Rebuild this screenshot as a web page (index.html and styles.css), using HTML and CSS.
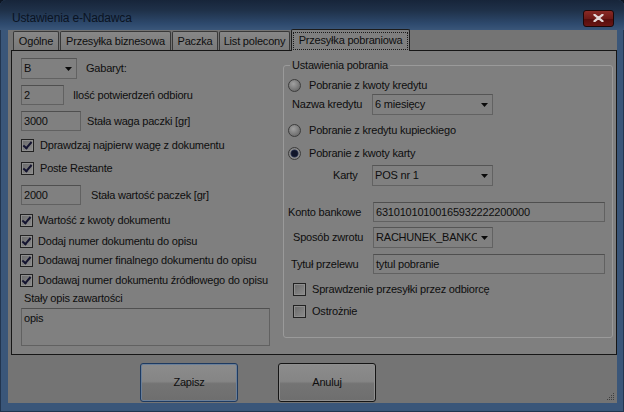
FILE: index.html
```html
<!DOCTYPE html>
<html lang="pl">
<head>
<meta charset="utf-8">
<title>Ustawienia e-Nadawca</title>
<link rel="stylesheet" href="styles.css">
</head>
<body>
<div class="window">
  <div class="titlebar">
    <div class="title">Ustawienia e-Nadawca</div>
    <div class="close"><svg width="11" height="8" viewBox="0 0 11 8"><path d="M1.5 0.8 L9.5 7.2 M9.5 0.8 L1.5 7.2" stroke="#e4d8d8" stroke-width="2.2" stroke-linecap="round"/></svg></div>
  </div>
  <div class="client">
    <div class="tabstrip">
      <div class="tab tab-general">Ogólne</div>
      <div class="tab tab-business">Przesyłka biznesowa</div>
      <div class="tab tab-parcel">Paczka</div>
      <div class="tab tab-letter">List polecony</div>
      <div class="tab tab-cod active"><span class="focus">Przesyłka pobraniowa</span></div>
    </div>
    <div class="tabpage">
      <div class="col-left">
        <div class="row h21">
          <div class="combo w56"><span class="combo-text">B</span><span class="combo-btn"><svg width="7" height="4" viewBox="0 0 7 4"><path d="M0 0H7L3.5 4Z" fill="#0a0a0a"/></svg></span></div>
          <span class="lbl ml9">Gabaryt:</span>
        </div>
        <div class="row h20 mt6">
          <div class="tb w43">2</div>
          <span class="lbl ml9">Ilość potwierdzeń odbioru</span>
        </div>
        <div class="row h20 mt6">
          <div class="tb w60">3000</div>
          <span class="lbl ml6">Stała waga paczki [gr]</span>
        </div>
        <div class="row h17 mt6">
          <span class="cb checked"></span><span class="lbl">Dprawdzaj najpierw wagę z dokumentu</span>
        </div>
        <div class="row h17 mt6">
          <span class="cb checked"></span><span class="lbl">Poste Restante</span>
        </div>
        <div class="row h20 mt8">
          <div class="tb w60">2000</div>
          <span class="lbl ml10">Stała wartość paczek [gr]</span>
        </div>
        <div class="row h17 mt7 shift">
          <span class="cb checked"></span><span class="lbl">Wartość z kwoty dokumentu</span>
        </div>
        <div class="row h17 mt4 shift">
          <span class="cb checked"></span><span class="lbl">Dodaj numer dokumentu do opisu</span>
        </div>
        <div class="row h17 mt2 shift">
          <span class="cb checked"></span><span class="lbl">Dodawaj numer finalnego dokumentu do opisu</span>
        </div>
        <div class="row h17 mt3 shift">
          <span class="cb checked"></span><span class="lbl">Dodawaj numer dokumentu źródłowego do opisu</span>
        </div>
        <div class="row h16 mt1">
          <span class="lbl pl3">Stały opis zawartości</span>
        </div>
        <div class="memo mt2">opis</div>
      </div>
      <fieldset class="group">
        <legend>Ustawienia pobrania</legend>
        <div class="group-body">
          <div class="row h16 mt5">
            <span class="radio"></span><span class="lbl">Pobranie z kwoty kredytu</span>
          </div>
          <div class="row h21 mt1">
            <span class="flabel w88 pl8">Nazwa kredytu</span>
            <div class="combo w121"><span class="combo-text">6 miesięcy</span><span class="combo-btn"><svg width="7" height="4" viewBox="0 0 7 4"><path d="M0 0H7L3.5 4Z" fill="#0a0a0a"/></svg></span></div>
          </div>
          <div class="row h16 mt7">
            <span class="radio"></span><span class="lbl">Pobranie z kredytu kupieckiego</span>
          </div>
          <div class="row h16 mt7">
            <span class="radio selected"></span><span class="lbl">Pobranie z kwoty karty</span>
          </div>
          <div class="row h21 mt4">
            <span class="flabel w88 pl49">Karty</span>
            <div class="combo w121"><span class="combo-text">POS nr 1</span><span class="combo-btn"><svg width="7" height="4" viewBox="0 0 7 4"><path d="M0 0H7L3.5 4Z" fill="#0a0a0a"/></svg></span></div>
          </div>
          <div class="row h20 mt16">
            <span class="flabel w89 pl4">Konto bankowe</span>
            <div class="tb w232">63101010100165932222200000</div>
          </div>
          <div class="row h21 mt5">
            <span class="flabel w89 pl9">Sposób zwrotu</span>
            <div class="combo w120"><span class="combo-text">RACHUNEK_BANKOWY</span><span class="combo-btn"><svg width="7" height="4" viewBox="0 0 7 4"><path d="M0 0H7L3.5 4Z" fill="#0a0a0a"/></svg></span></div>
          </div>
          <div class="row h20 mt6">
            <span class="flabel w89 pl7">Tytuł przelewu</span>
            <div class="tb w232">tytul pobranie</div>
          </div>
          <div class="row h16 mt7 indent">
            <span class="cb"></span><span class="lbl">Sprawdzenie przesyłki przez odbiorcę</span>
          </div>
          <div class="row h16 mt6 indent">
            <span class="cb"></span><span class="lbl">Ostrożnie</span>
          </div>
        </div>
      </fieldset>
    </div>
    <div class="actions">
      <button class="btn default">Zapisz</button>
      <button class="btn">Anuluj</button>
    </div>
    <div class="grip"><svg width="8" height="8" viewBox="0 0 8 8" fill="#3e3e3e"><rect x="6" y="0" width="1" height="1"/><rect x="4" y="2" width="1" height="1"/><rect x="6" y="2" width="1" height="1"/><rect x="2" y="4" width="1" height="1"/><rect x="4" y="4" width="1" height="1"/><rect x="6" y="4" width="1" height="1"/><rect x="0" y="6" width="1" height="1"/><rect x="2" y="6" width="1" height="1"/><rect x="4" y="6" width="1" height="1"/><rect x="6" y="6" width="1" height="1"/></svg></div>
  </div>
</div>
</body>
</html>
```

FILE: styles.css
```css
* { box-sizing: border-box; }
html, body { margin: 0; padding: 0; background: #0d1522; }
body {
  font-family: "Liberation Sans", Arial, sans-serif;
  font-size: 11px;
  letter-spacing: -0.2px;
  color: #0e0e0e;
  line-height: 13px;
}
.window {
  width: 624px;
  height: 412px;
  display: flex;
  flex-direction: column;
  background: #3a5679;
  border-radius: 6px 6px 0 0;
  overflow: hidden;
  box-shadow: inset 0 0 0 1px #22354f;
}
.titlebar {
  height: 30px;
  flex: none;
  display: flex;
  align-items: center;
  padding: 6px 10px 0 12px;
  background: linear-gradient(#17253a 0%, #1f3149 35%, #2e4a6e 80%, #3a5679 100%);
}
.title {
  flex: 1;
  font-size: 12px;
  letter-spacing: -0.15px;
  color: #0a1322;
}
.close {
  width: 31px;
  height: 17px;
  border: 1px solid #1e0707;
  border-radius: 3px;
  background: linear-gradient(#8a2a25 0%, #6e1a17 50%, #570d0c 55%, #6a1614 100%);
  display: flex;
  align-items: center;
  justify-content: center;
}
.client {
  position: relative;
  flex: 1;
  margin: 0 7px 9px 8px;
  background: #747474;
  display: flex;
  flex-direction: column;
}
.tabstrip {
  height: 20px;
  flex: none;
  display: flex;
  align-items: flex-end;
  gap: 1px;
  padding-left: 5px;
}
.tab {
  height: 19px;
  border: 1px solid #383838;
  border-bottom: none;
  border-radius: 2px 2px 0 0;
  background: linear-gradient(#878787, #797979);
  display: flex;
  align-items: center;
  justify-content: center;
  padding-top: 1px;
  white-space: nowrap;
}
.tab-general { width: 46px; }
.tab-business { width: 111px; }
.tab-parcel { width: 46px; }
.tab-letter { width: 71px; }
.tab-cod { width: 119px; }
.tab.active {
  position: relative;
  z-index: 1;
  height: 22px;
  margin-bottom: -1px;
  padding: 1px 1px 1px;
  background: #7f7f7f;
  border-color: #1c1c1c;
}
.focus {
  flex: 1;
  height: 18px;
  border: 1px dotted #1a1a1a;
  display: flex;
  align-items: center;
  justify-content: center;
}
.tabpage {
  flex: none;
  margin-left: 3px;
  width: 606px;
  height: 305px;
  border: 1px solid #161616;
  background: #7f7f7f;
  display: flex;
  padding: 7px 3px 0 9px;
}
.col-left {
  width: 262px;
  flex: none;
  display: flex;
  flex-direction: column;
}
.row { display: flex; align-items: center; flex: none; white-space: nowrap; }
.h16 { height: 16px; }
.h17 { height: 17px; }
.h20 { height: 20px; }
.h21 { height: 21px; }
.mt1 { margin-top: 1px; }
.mt2 { margin-top: 2px; }
.mt3 { margin-top: 3px; }
.mt4 { margin-top: 4px; }
.mt5 { margin-top: 5px; }
.mt6 { margin-top: 6px; }
.mt7 { margin-top: 7px; }
.mt8 { margin-top: 8px; }
.mt16 { margin-top: 16px; }
.ml6 { margin-left: 6px; }
.ml9 { margin-left: 9px; }
.ml10 { margin-left: 10px; }
.pl3 { padding-left: 3px; }
.pl4 { padding-left: 4px; }
.pl7 { padding-left: 7px; }
.pl8 { padding-left: 8px; }
.pl9 { padding-left: 9px; }
.pl49 { padding-left: 49px; }
.w43 { width: 43px; }
.w56 { width: 56px; }
.w60 { width: 60px; }
.w88 { width: 88px; }
.w89 { width: 89px; }
.w120 { width: 120px; }
.w121 { width: 121px; }
.w232 { width: 232px; }
.flabel { flex: none; }
.tb {
  height: 20px;
  flex: none;
  border: 1px solid #616161;
  border-top-color: #4f4f4f;
  background: #808080;
  padding-left: 2px;
  display: flex;
  align-items: center;
}
.combo {
  height: 21px;
  flex: none;
  border: 1px solid #626262;
  border-top-color: #555555;
  background: #808080;
  display: flex;
  align-items: center;
  padding-left: 2px;
}
.combo-text { flex: 1; overflow: hidden; white-space: nowrap; min-width: 0; }
.combo-btn {
  width: 15px;
  height: 100%;
  flex: none;
  display: flex;
  align-items: center;
  justify-content: center;
  padding-top: 1px;
}
.cb {
  width: 13px;
  height: 13px;
  flex: none;
  margin-left: 0;
  margin-right: 6px;
  border: 1px solid #222222;
  background: linear-gradient(135deg, #6a6a6a, #8c8c8c);
  box-shadow: inset 0 0 0 1px #8e8e8e;
  position: relative;
}
.cb.checked::after {
  content: "";
  position: absolute;
  left: 3px;
  top: 0px;
  width: 3px;
  height: 7px;
  border: solid #141430;
  border-width: 0 2px 2px 0;
  transform: rotate(40deg);
}
.shift .cb { margin-left: -1px; margin-right: 5px; }
.indent .cb { margin-left: 9px; margin-right: 6px; }
.memo {
  width: 249px;
  height: 38px;
  flex: none;
  border: 1px solid #616161;
  border-top-color: #505050;
  background: #808080;
  padding: 3px 2px;
}
.group {
  margin: 0;
  padding: 0;
  width: 330px;
  height: 280px;
  flex: none;
  border: 1px solid #9a9a9a;
  border-radius: 3px;
  min-inline-size: 0;
}
.group legend {
  margin-left: 6px;
  padding: 0 2px;
  line-height: 14px;
}
.group-body { display: flex; flex-direction: column; }
.radio {
  width: 13px;
  height: 13px;
  flex: none;
  margin-left: 4px;
  margin-right: 8px;
  border-radius: 50%;
  border: 1px solid #3c3c3c;
  background: radial-gradient(circle at 40% 35%, #a0a0a0, #6a6a6a 80%);
}
.radio.selected {
  background: radial-gradient(circle at 50% 50%, #11162a 0 2.8px, #2f3752 3.6px, #8c8c8c 4.4px, #707070 100%);
}
.actions {
  flex: none;
  display: flex;
  gap: 40px;
  margin-top: 8px;
  padding-left: 132px;
}
.btn {
  width: 98px;
  height: 39px;
  border: 1px solid #151515;
  border-radius: 3px;
  background: linear-gradient(#8c8c8c 0%, #858585 47%, #747474 53%, #6e6e6e 100%);
  box-shadow: inset 0 0 0 1px #8f8f8f;
  font: inherit;
  letter-spacing: -0.2px;
  color: #0e0e0e;
  padding: 0;
}
.btn.default {
  border-color: #1e3a60;
  box-shadow: inset 0 0 0 1px #6a7f99;
}
.grip {
  position: absolute;
  right: 2px;
  bottom: 2px;
  width: 8px;
  height: 8px;
  line-height: 0;
}
```
